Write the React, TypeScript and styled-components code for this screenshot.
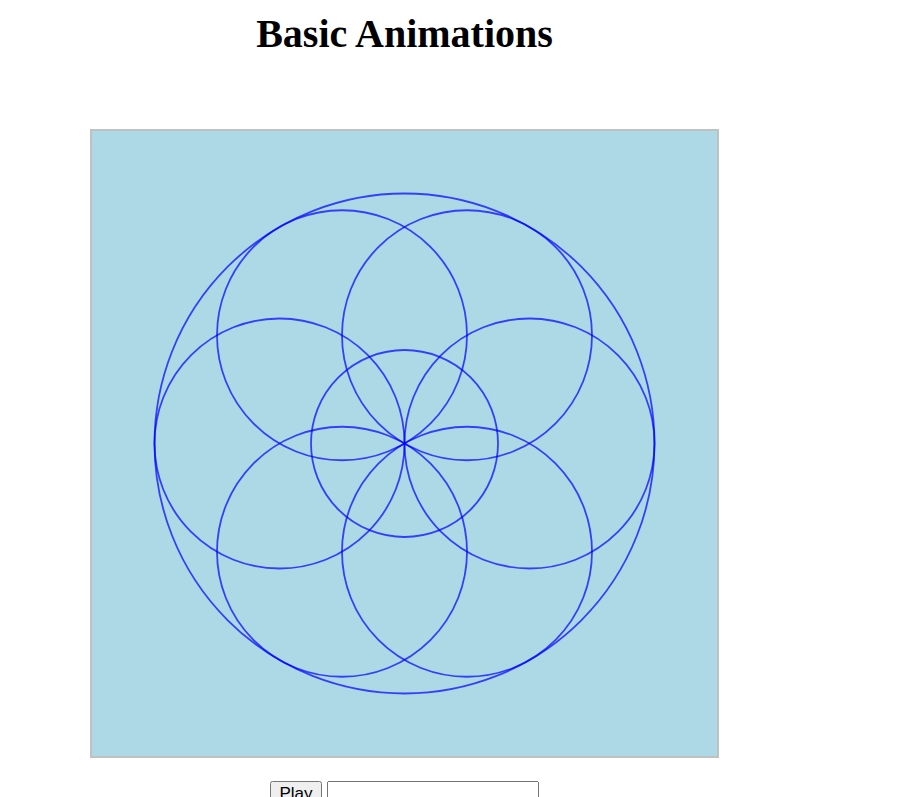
import React from "react";
import styled, { createGlobalStyle } from "styled-components";

const Global = createGlobalStyle`
  html, body { margin: 0; padding: 0; background: #ffffff; }
  body { font-family: "Liberation Serif", "Times New Roman", serif; }
`;

const Page = styled.div`
  padding-left: 90px;
  display: flex;
  flex-direction: column;
  width: 629px;
`;

const Title = styled.h1`
  margin: 10px 0 72px;
  font-family: "Liberation Serif", "Times New Roman", serif;
  font-size: 40px;
  font-weight: bold;
  text-align: center;
  color: #000;
`;

const Stage = styled.div`
  width: 625px;
  height: 625px;
  border: 2px solid #c0c0c0;
  background: #add8e6;
`;

const Controls = styled.div`
  margin-top: 23px;
  display: flex;
  justify-content: center;
  align-items: flex-start;
  gap: 5px;
`;

const PlayButton = styled.button`
  font-family: "Liberation Sans", Arial, sans-serif;
  font-size: 17px;
  padding: 1px 7px;
`;

const Field = styled.input`
  box-sizing: border-box;
  width: 212px;
  height: 26px;
  font-family: "Liberation Sans", Arial, sans-serif;
  font-size: 17px;
`;

const C = 312.5;
const R = 250;
const r = 125;

export default function App() {
  const petals = Array.from({ length: 6 }, (_, i) => {
    const a = (i * Math.PI) / 3;
    return { x: C + r * Math.cos(a), y: C + r * Math.sin(a) };
  });
  return (
    <>
      <Global />
      <Page>
        <Title>Basic Animations</Title>
        <Stage>
          <svg width="625" height="625" viewBox="0 0 625 625">
            <g fill="none" stroke="rgba(0,0,255,0.7)" strokeWidth="1.8">
              <circle cx={C} cy={C} r={R} />
              {petals.map((p, i) => (
                <circle key={i} cx={p.x} cy={p.y} r={r} />
              ))}
              <circle cx={C} cy={C} r={93.5} />
            </g>
          </svg>
        </Stage>
        <Controls>
          <PlayButton>Play</PlayButton>
          <Field type="text" />
        </Controls>
      </Page>
    </>
  );
}
